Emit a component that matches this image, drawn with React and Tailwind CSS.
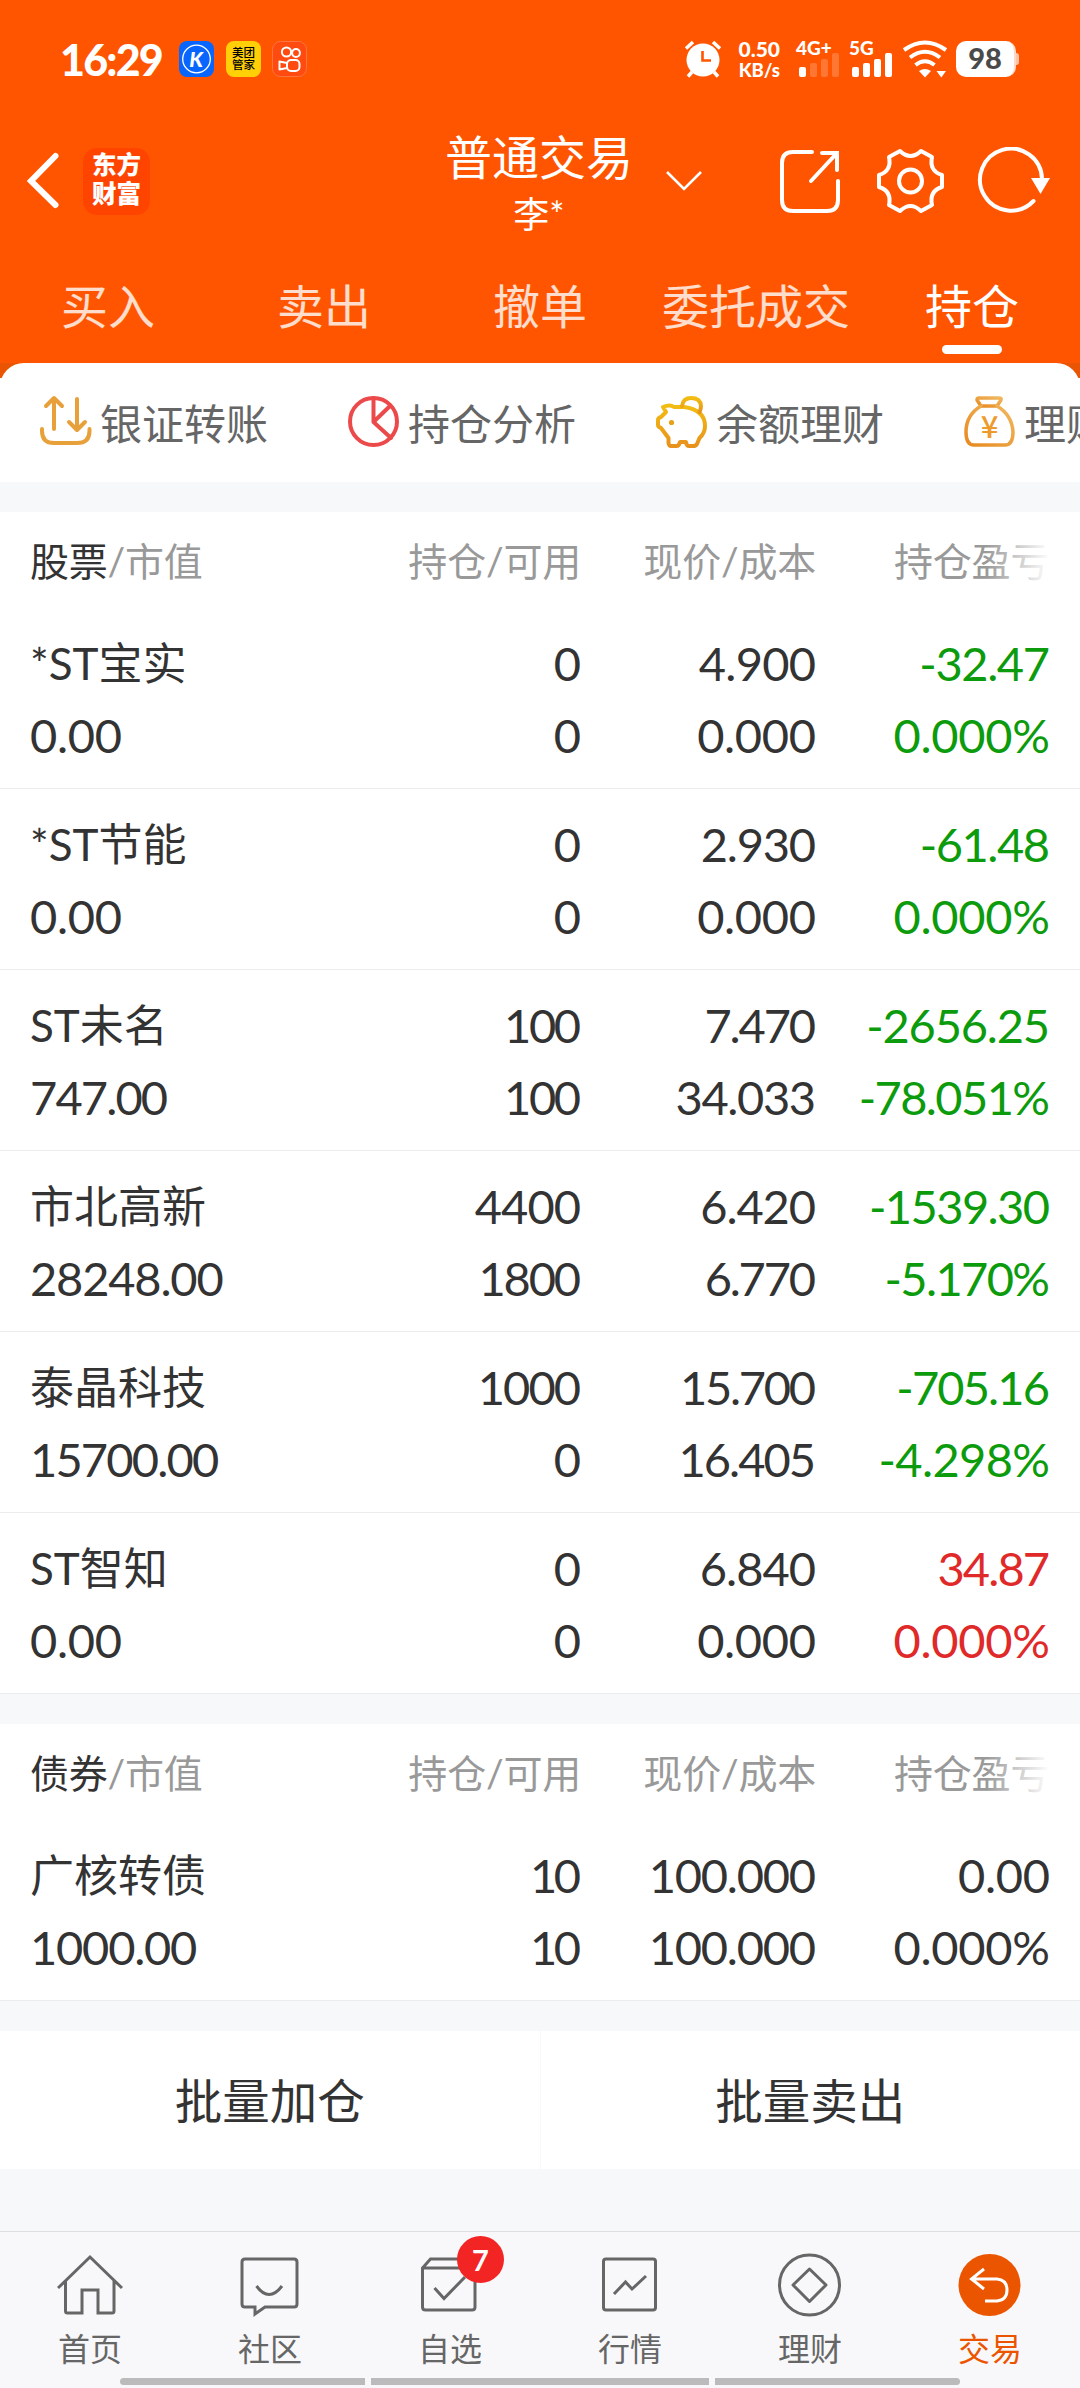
// 东方财富普通交易 - 持仓页
const TABS = ["买入", "卖出", "撤单", "委托成交", "持仓"];

const STOCKS = [
  { name: "*ST宝实", value: "0.00", hold: "0", usable: "0", price: "4.900", cost: "0.000", profit: "-32.47", rate: "0.000%", color: "text-[#0c9b0c]" },
  { name: "*ST节能", value: "0.00", hold: "0", usable: "0", price: "2.930", cost: "0.000", profit: "-61.48", rate: "0.000%", color: "text-[#0c9b0c]" },
  { name: "ST未名", value: "747.00", hold: "100", usable: "100", price: "7.470", cost: "34.033", profit: "-2656.25", rate: "-78.051%", color: "text-[#0c9b0c]" },
  { name: "市北高新", value: "28248.00", hold: "4400", usable: "1800", price: "6.420", cost: "6.770", profit: "-1539.30", rate: "-5.170%", color: "text-[#0c9b0c]" },
  { name: "泰晶科技", value: "15700.00", hold: "1000", usable: "0", price: "15.700", cost: "16.405", profit: "-705.16", rate: "-4.298%", color: "text-[#0c9b0c]" },
  { name: "ST智知", value: "0.00", hold: "0", usable: "0", price: "6.840", cost: "0.000", profit: "34.87", rate: "0.000%", color: "text-[#e02a2a]" },
];

const BONDS = [{ name: "广核转债", value: "1000.00", hold: "10", usable: "10", price: "100.000", cost: "100.000", profit: "0.00", rate: "0.000%", color: "text-[#333]" }];

// 窄数字（1、7 等）收紧字距
const TRIM = { 1: 6.5, 7: 4.5, 2: 2.2, 3: 2.2, 4: 1.4, 5: 2, 6: 1.6, 8: 1.4, 9: 1.4, 0: 0.4, "-": -2 };

function Num({ children }) {
  const trim = [...children].reduce((sum, c) => sum + (TRIM[c] || 0), 0) / children.length;
  return <span style={{ letterSpacing: `${-trim}px`, marginRight: `${trim}px` }}>{children}</span>;
}

function Signal({ label, level }) {
  const bars = ["h-[10px]", "h-[14px]", "h-[18px]", "h-[24px]"];
  return (
    <div className="relative flex h-9 w-[40px] items-end gap-1">
      <span className="absolute -left-[3px] -top-[3px] text-[19px] font-black leading-5 whitespace-nowrap">{label}</span>
      {bars.map((h, i) => (
        <span key={h} className={`w-[7px] rounded-[2px] ${h} ${i < level ? "bg-white" : "bg-white/20"}`} />
      ))}
    </div>
  );
}

function StatusBar() {
  return (
    <div className="flex h-[118px] items-center pl-[60px]">
      <span className="w-[103px] font-[Lato] text-[43px] font-black leading-none tracking-[-1.8px]">16:29</span>
      <svg className="ml-4" width="35" height="36" viewBox="0 0 35 36">
        <rect width="35" height="36" rx="8" fill="#0866ff" />
        <circle cx="17.5" cy="18" r="13.8" fill="none" stroke="#fff" strokeWidth="1.3" />
        <text x="17" y="25.500" textAnchor="middle" fill="#fff" fontFamily="Lato" fontSize="21" fontWeight="900" fontStyle="italic">K</text>
      </svg>
      <div className="ml-3 flex h-9 w-[35px] flex-col items-center justify-center rounded-lg bg-[#ffd008] text-[11.5px] font-medium leading-[12.5px] text-black">
        <span>美团</span>
        <span>管家</span>
      </div>
      <svg className="ml-[11px]" width="35" height="36" viewBox="0 0 35 36" fill="none" stroke="#fff" strokeWidth="2">
        <rect x="0.5" y="0.5" width="34" height="35" rx="8" fill="#ff4a10" stroke="#ff7440" strokeWidth="1" />
        <circle cx="14.5" cy="11" r="4.6" />
        <circle cx="24" cy="12" r="3.9" />
        <rect x="15" y="19" width="12.5" height="11" rx="4" />
        <path d="M15 22L7.5 20.5V28.5L15 27" strokeLinejoin="round" />
      </svg>

      <svg className="ml-[377px]" width="38" height="38" viewBox="0 0 38 38" fill="none" stroke="#fff" strokeWidth="3.5">
        <circle cx="19" cy="20" r="16.5" fill="#fff" stroke="none" />
        <path d="M2 8.5L9 2M36 8.5L29 2M4 36.5L8 32M34 36.5L30 32" />
        <path d="M18.5 11V20.500H27" stroke="#ff5500" strokeWidth="2.6" />
      </svg>
      <div className="ml-[12px] flex w-[46px] flex-col items-end gap-px pt-px font-black">
        <span className="text-[21px] leading-5">0.50</span>
        <span className="whitespace-nowrap text-[18.5px] leading-5">KB/s</span>
      </div>
      <div className="ml-[19px]">
        <Signal label="4G+" level={1} />
      </div>
      <div className="ml-[13px]">
        <Signal label="5G" level={4} />
      </div>
      <svg className="ml-2.5" width="46" height="38" viewBox="0 0 46 38" fill="none" stroke="#fff" strokeWidth="4">
        <path d="M2 10Q23 -5 44 10" />
        <path d="M8 17.500Q23 6 38 17.500" />
        <path d="M13.500 25Q23 17.500 32.500 25" />
        <path d="M17 31Q23 27 29 31L23 37.500Z" fill="#fff" stroke="none" />
        <path d="M34.500 31H44L39.300 37.500Z" fill="#fff" stroke="none" />
      </svg>
      <div className="ml-2 flex h-9 w-[60px] items-center justify-center rounded-[10px] border-r-2 border-[#ffd9c8] bg-white pb-0.5 text-[29px] font-black text-[#4a4a4a]">98</div>
      <span className="h-3 w-[3px] rounded-r-sm bg-[#ffc4a8]" />
    </div>
  );
}

function TitleBar() {
  return (
    <div className="flex h-[126px] items-center">
      <div className="flex w-[426px] items-center pl-[26px]">
        <svg width="34" height="58" viewBox="0 0 34 58" fill="none" stroke="#fff" strokeWidth="6" strokeLinecap="round">
          <path d="M29.500 4L5 29L29.500 53" />
        </svg>
        <div className="ml-[23px] flex h-[67px] w-[67px] flex-col items-center justify-center rounded-[14px] bg-[#ff4400] pb-1 text-[24.5px] font-black leading-[29px]">
          <span>东方</span>
          <span>财富</span>
        </div>
      </div>
      <div className="flex w-[226px] flex-col items-center pt-1">
        <span className="text-[47px] leading-[62px]">普通交易</span>
        <span className="text-[36px] leading-[52px]">李*</span>
      </div>
      <svg className="ml-[13px]" width="38" height="22" viewBox="0 0 38 22" fill="none" stroke="#fff" strokeWidth="2.6">
        <path d="M2 2L19 19L36 2" />
      </svg>
      <svg className="ml-[75px]" width="64" height="68" viewBox="0 0 64 68" fill="none" stroke="#fff" strokeWidth="4" strokeLinecap="round">
        <path d="M34 5H15Q4 5 4 16V53Q4 64 15 64H49Q60 64 60 53V34" />
        <path d="M44 6H59V23M59 6L33 34" />
      </svg>
      <svg className="ml-[33px]" width="71" height="68" viewBox="0 0 71 68" fill="none" stroke="#fff" strokeWidth="4" strokeLinejoin="round">
        <path d="M25 4Q35.500 14 46 4L57 10Q54 24 67 28V40Q54 44 57 58L46 64Q35.500 54 25 64L14 58Q17 44 4 40V28Q17 24 14 10Z" />
        <circle cx="35.500" cy="34" r="11.500" />
      </svg>
      <svg className="ml-[31px]" width="74" height="68" viewBox="0 0 74 68" fill="none" stroke="#fff" strokeWidth="4" strokeLinecap="round">
        <path d="M65 32A31 31 0 1 0 56.500 54" />
        <path d="M54 31H73L63.500 47Z" fill="#fff" stroke="none" />
      </svg>
    </div>
  );
}

function QuickEntry({ label, children }) {
  return (
    <div className="flex shrink-0 items-center gap-[8px]">
      <svg width="53" height="53" viewBox="0 0 53 53" fill="none" strokeWidth="4" strokeLinecap="round" strokeLinejoin="round">
        {children}
      </svg>
      <span className="pt-1 text-[42px] leading-[60px] text-[#666]">{label}</span>
    </div>
  );
}

function QuickEntries() {
  return (
    <div className="flex h-[104px] gap-[79px] overflow-hidden pb-[17px] pl-[39px]">
      <QuickEntry label="银证转账">
        <g stroke="#e8a03a">
          <path d="M15 34V4M7 11L15 3L23 11M38 4V34M30 27L38 35L46 27" />
          <path d="M3 34V36Q3 48 15 48H38Q50.500 48 50.500 36V34" />
        </g>
      </QuickEntry>
      <QuickEntry label="持仓分析">
        <g stroke="#ec4a4a">
          <circle cx="26.500" cy="26.500" r="23.500" />
          <path d="M26.500 3V27L43 11M26.500 27L44 43" />
        </g>
      </QuickEntry>
      <QuickEntry label="余额理财">
        <defs>
          <linearGradient id="pig" x1="0" y1="0" x2="0" y2="1">
            <stop offset="0" stopColor="#f2bd12" />
            <stop offset="1" stopColor="#e8921c" />
          </linearGradient>
        </defs>
        <g stroke="url(#pig)">
          <path d="M8 12Q15 9 19 12Q24 12 29 12Q50 15 50 31Q50 38 44.500 43L42 49Q41 51 38 51H34Q31.500 51 31 47H25Q24 51 21.500 51H16Q14 51 13.500 48V43L6 33Q3 32 3 30V25Q3 23 6 22Q8 20 11 17Z" />
          <path d="M27 11Q28 3 36 3Q45.500 3 46 11Q46 14 44.500 17" />
          <circle cx="16.500" cy="27.500" r="2.600" fill="#e8a018" stroke="none" />
        </g>
      </QuickEntry>
      <QuickEntry label="理财">
        <defs>
          <linearGradient id="bag" x1="1" y1="0" x2="0" y2="1">
            <stop offset="0" stopColor="#f0b860" />
            <stop offset="1" stopColor="#e88a20" />
          </linearGradient>
        </defs>
        <g stroke="url(#bag)" strokeWidth="3.500">
          <path d="M18 11L14 5Q14 3 16 3H36Q39 3 38 5L34 11Z" />
          <path d="M18 11Q3 20 3 37Q3 50 11 50H42Q50 50 50 37Q49 20 34 11" />
        </g>
        <text x="26.500" y="43" textAnchor="middle" fill="#ef9a2c" fontFamily="Noto Sans CJK SC" fontSize="31" fontWeight="500">¥</text>
      </QuickEntry>
    </div>
  );
}

function HoldingRow({ item }) {
  return (
    <div className="flex h-[181px] border-b border-[#ececec] pl-[30px] pr-[30px] pt-[19px] text-[47px] leading-[72px] text-[#333]">
      <div className="flex w-[321px] flex-col">
        <span className="text-[44px]">{item.name}</span>
        <Num>{item.value}</Num>
      </div>
      <div className="flex w-[230px] flex-col items-end">
        <Num>{item.hold}</Num>
        <Num>{item.usable}</Num>
      </div>
      <div className="flex w-[235px] flex-col items-end">
        <Num>{item.price}</Num>
        <Num>{item.cost}</Num>
      </div>
      <div className={`flex flex-1 flex-col items-end ${item.color}`}>
        <Num>{item.profit}</Num>
        <Num>{item.rate}</Num>
      </div>
    </div>
  );
}

function HoldingTable({ title, rows }) {
  return (
    <section className="bg-white">
      <div className="flex h-24 items-center pl-[30px] pr-[30px] pt-0.5 text-[39px] tracking-[-0.2px] text-[#999]">
        <div className="w-[321px]">
          <span className="text-[#333]">{title}</span>/市值
        </div>
        <span className="w-[230px] text-right">持仓/可用</span>
        <span className="w-[235px] text-right">现价/成本</span>
        <div className="relative ml-[78px] w-[156px] whitespace-nowrap">
          持仓盈亏
          <span className="absolute inset-y-0 right-0 w-[64px] bg-linear-to-r from-white/0 to-white" />
        </div>
      </div>
      {rows.map((r) => (
        <HoldingRow key={r.name} item={r} />
      ))}
    </section>
  );
}

function NavItem({ label, active, badge, children }) {
  return (
    <div className={`flex w-[180px] flex-col items-center pt-[21px] ${active ? "text-[#eb5500]" : "text-[#666]"}`}>
      <div className="relative h-16 w-[66px]">
        <svg width="66" height="64" viewBox="0 0 66 64" fill="none" stroke="currentColor" strokeWidth="3">
          {children}
        </svg>
        {badge && <span className="absolute -top-[17px] left-10 flex h-[47px] w-[47px] items-center justify-center rounded-full bg-[#f22424] text-[29px] font-bold text-white">{badge}</span>}
      </div>
      <span className="mt-[8px] text-[32px] leading-[48px]">{label}</span>
    </div>
  );
}

export default function App() {
  return (
    <div className="flex h-[2388px] w-[1080px] flex-col overflow-hidden bg-[#f7f8fa] font-[Lato,'Noto_Sans_CJK_SC',sans-serif]">
      <header className="h-[363px] bg-[#ff5500] text-white">
        <StatusBar />
        <TitleBar />
        <nav className="flex h-[119px]">
          {TABS.map((tab) => (
            <div key={tab} className={`flex w-[216px] flex-col items-center pt-[29px] text-[47px] leading-[66px] ${tab === "持仓" ? "text-white" : "text-white/80"}`}>
              {tab}
              {tab === "持仓" && <span className="mt-1.5 h-[9px] w-[60px] rounded-full bg-white" />}
            </div>
          ))}
        </nav>
      </header>

      {/* 快捷入口 */}
      <div className="h-[119px] bg-white">
        <div className="h-[15px] overflow-hidden bg-[#ea5504]">
          <div className="h-10 rounded-t-[24px] bg-white" />
        </div>
        <QuickEntries />
      </div>

      <main className="mt-[30px] flex flex-col gap-[30px]">
        <HoldingTable title="股票" rows={STOCKS} />
        <HoldingTable title="债券" rows={BONDS} />
        <div className="flex h-[138px] bg-white text-[47.5px] text-[#333]">
          <button className="flex-1 border-r border-[#f7f8fa] pt-0.5">批量加仓</button>
          <button className="flex-1 pt-0.5">批量卖出</button>
        </div>
      </main>

      <footer className="mt-[62px] h-[157px] border-t border-[#dfdfe1] bg-[#f8f8fa]">
        <div className="flex h-[146px]">
          <NavItem label="首页">
            <path d="M1 35L33 4L65 35M8.500 28V58Q8.500 60 10.500 60H25V37H41V60H55Q57 60 57 58V28" />
          </NavItem>
          <NavItem label="社区">
            <path d="M8 6H57Q60 6 60 9V51Q60 54 57 54H28L18 61V54H8Q5 54 5 51V9Q5 6 8 6Z" />
            <path d="M19.500 33Q32 50 45 33" />
          </NavItem>
          <NavItem label="自选" badge="7">
            <path d="M5.500 15H58V54Q58 57 55 57H8.500Q5.500 57 5.500 54V15L13.500 6H50L58 15M17.500 35L27 45.500L48 24" />
          </NavItem>
          <NavItem label="行情">
            <rect x="6.500" y="6" width="52" height="51" rx="2.500" />
            <path d="M17 41L28.500 29L35 36L49 23" />
          </NavItem>
          <NavItem label="理财">
            <circle cx="32.500" cy="32" r="30" />
            <path d="M32.500 16L49 32L32.500 48.500L16 32Z" strokeLinejoin="round" />
          </NavItem>
          <NavItem label="交易" active>
            <circle cx="32.500" cy="32" r="31" fill="#eb5500" stroke="none" />
            <path d="M27 16L14.500 26L27 36M14.500 26H40Q50 27 50 37Q50 47 40 48H28" stroke="#fff" />
          </NavItem>
        </div>
        <div className="flex justify-center gap-1.5">
          <span className="h-[7px] w-[245px] rounded-l-full bg-[#bbb]" />
          <span className="h-[7px] w-[338px] bg-[#bbb]" />
          <span className="h-[7px] w-[245px] rounded-r-full bg-[#bbb]" />
        </div>
      </footer>
    </div>
  );
}
